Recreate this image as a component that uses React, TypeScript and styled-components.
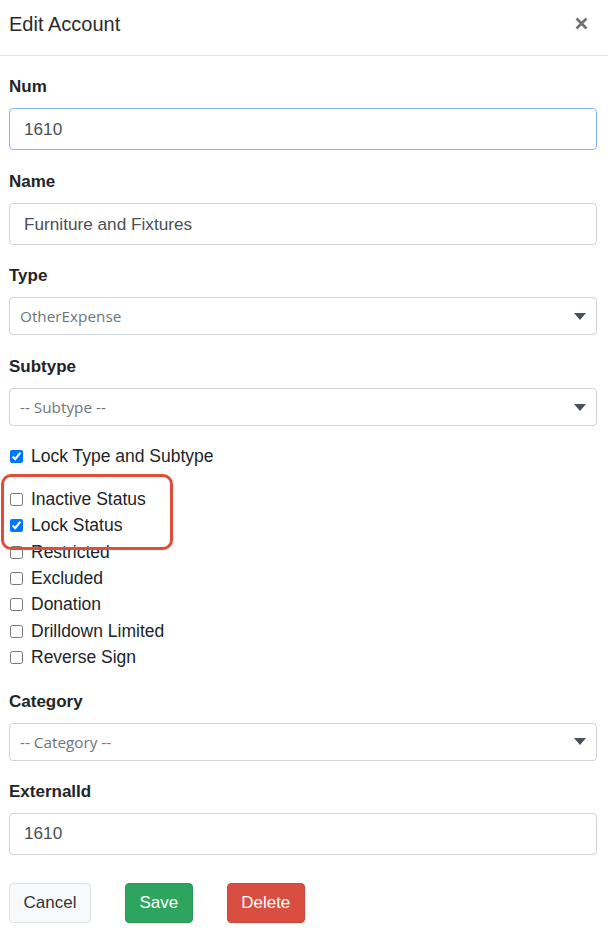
import React from "react";
import styled, { createGlobalStyle } from "styled-components";

const GlobalStyle = createGlobalStyle`
  html, body { margin: 0; padding: 0; background: #ffffff; }
  body {
    font-family: "Liberation Sans", Arial, sans-serif;
    color: #212529;
    font-size: 16px;
  }
  * { box-sizing: border-box; }
`;

const Modal = styled.div`
  width: 608px;
  background: #ffffff;
`;

const Header = styled.div`
  height: 56px;
  display: flex;
  align-items: flex-start;
  justify-content: space-between;
  padding: 12px 20px 0 9px;
  border-bottom: 1px solid #e5e5e5;
`;

const Title = styled.h4`
  margin: 0;
  font-size: 20px;
  line-height: 24px;
  font-weight: 400;
  color: #2b2b2b;
`;

const CloseButton = styled.button`
  border: 0;
  background: transparent;
  padding: 0;
  margin-top: 5px;
  width: 13px;
  height: 13px;
  display: flex;
  cursor: pointer;
`;

const Body = styled.div`
  padding: 18px 11px 0 9px;
`;

const FormGroup = styled.div<{ $mb?: number; $mt?: number }>`
  margin-top: ${(p) => p.$mt ?? 0}px;
  margin-bottom: ${(p) => p.$mb ?? 20}px;
`;

const Label = styled.label`
  display: block;
  font-weight: 700;
  font-size: 17px;
  line-height: 24px;
  padding-top: 1px;
  margin-bottom: 9px;
  color: #212529;
`;

const TextInput = styled.input<{ $focus?: boolean }>`
  display: block;
  width: 100%;
  height: 42px;
  padding: 0 13px 0 14px;
  font-family: "Liberation Sans", Arial, sans-serif;
  font-size: 17.2px;
  color: #495057;
  background: #fff;
  border: 1px solid ${(p) => (p.$focus ? "#86b7fe" : "#ced4da")};
  border-radius: 4px;
  outline: none;
`;

const SelectBox = styled.div`
  display: flex;
  align-items: center;
  justify-content: space-between;
  height: 38px;
  padding: 0 10px 0 10px;
  border: 1px solid #ced4da;
  border-radius: 4px;
  background: #fff;
  font-family: "Open Sans", "Noto Sans", sans-serif;
  font-size: 15.3px;
  color: #6c757d;
`;

const CheckList = styled.div`
  display: flex;
  flex-direction: column;
`;

const CheckRow = styled.label`
  display: flex;
  align-items: center;
  height: 26.33px;
  font-size: 17.5px;
  color: #212529;
`;

const Box = styled.input`
  width: 13px;
  height: 13px;
  margin: 0 8px 0 1px;
  accent-color: #0075ff;
`;

const Highlight = styled.div`
  position: relative;
  margin-top: 17px;
`;

const HighlightRing = styled.div`
  position: absolute;
  left: -8px;
  top: -12px;
  width: 172px;
  height: 76px;
  border: 3px solid #e04e39;
  border-radius: 10px;
  pointer-events: none;
`;

const Footer = styled.div`
  display: flex;
  gap: 34px;
  margin-top: 28px;
`;

const Button = styled.button<{ $variant: "light" | "success" | "danger" }>`
  height: 40px;
  padding: 0 13.5px;
  font-family: "Liberation Sans", Arial, sans-serif;
  font-size: 17px;
  border-radius: 4px;
  cursor: pointer;
  border: 1px solid
    ${(p) =>
      p.$variant === "light" ? "#dee2e6" : p.$variant === "success" ? "#2a9a56" : "#cf4638"};
  background: ${(p) =>
    p.$variant === "light" ? "#f8f9fa" : p.$variant === "success" ? "#2ea55e" : "#d94e41"};
  color: ${(p) => (p.$variant === "light" ? "#333" : "#fff")};
`;

const Caret = () => (
  <svg width="12" height="7" viewBox="0 0 12 7">
    <path d="M0 0 H12 L6 7 Z" fill="#495057" />
  </svg>
);

const CloseIcon = () => (
  <svg width="13" height="13" viewBox="0 0 13 13">
    <path d="M1.5 1.5 L11.5 11.5 M11.5 1.5 L1.5 11.5" stroke="#707070" strokeWidth="2.6" />
  </svg>
);

const Check = ({ label, checked }: { label: string; checked?: boolean }) => (
  <CheckRow>
    <Box type="checkbox" defaultChecked={checked} />
    {label}
  </CheckRow>
);

export default function App() {
  return (
    <Modal>
      <GlobalStyle />
      <Header>
        <Title>Edit Account</Title>
        <CloseButton aria-label="Close">
          <CloseIcon />
        </CloseButton>
      </Header>
      <Body>
        <FormGroup $mb={19}>
          <Label>Num</Label>
          <TextInput $focus defaultValue="1610" />
        </FormGroup>
        <FormGroup $mb={18}>
          <Label>Name</Label>
          <TextInput defaultValue="Furniture and Fixtures" />
        </FormGroup>
        <FormGroup $mb={19}>
          <Label>Type</Label>
          <SelectBox>
            <span>OtherExpense</span>
            <Caret />
          </SelectBox>
        </FormGroup>
        <FormGroup $mb={17}>
          <Label>Subtype</Label>
          <SelectBox>
            <span>-- Subtype --</span>
            <Caret />
          </SelectBox>
        </FormGroup>
        <CheckList>
          <Check label="Lock Type and Subtype" checked />
        </CheckList>
        <Highlight>
          <CheckList>
            <Check label="Inactive Status" />
            <Check label="Lock Status" checked />
          </CheckList>
          <HighlightRing />
        </Highlight>
        <CheckList>
          <Check label="Restricted" />
          <Check label="Excluded" />
          <Check label="Donation" />
          <Check label="Drilldown Limited" />
          <Check label="Reverse Sign" />
        </CheckList>
        <FormGroup $mt={18} $mb={18}>
          <Label>Category</Label>
          <SelectBox>
            <span>-- Category --</span>
            <Caret />
          </SelectBox>
        </FormGroup>
        <FormGroup $mb={0}>
          <Label>ExternalId</Label>
          <TextInput defaultValue="1610" />
        </FormGroup>
        <Footer>
          <Button $variant="light">Cancel</Button>
          <Button $variant="success">Save</Button>
          <Button $variant="danger">Delete</Button>
        </Footer>
      </Body>
    </Modal>
  );
}
